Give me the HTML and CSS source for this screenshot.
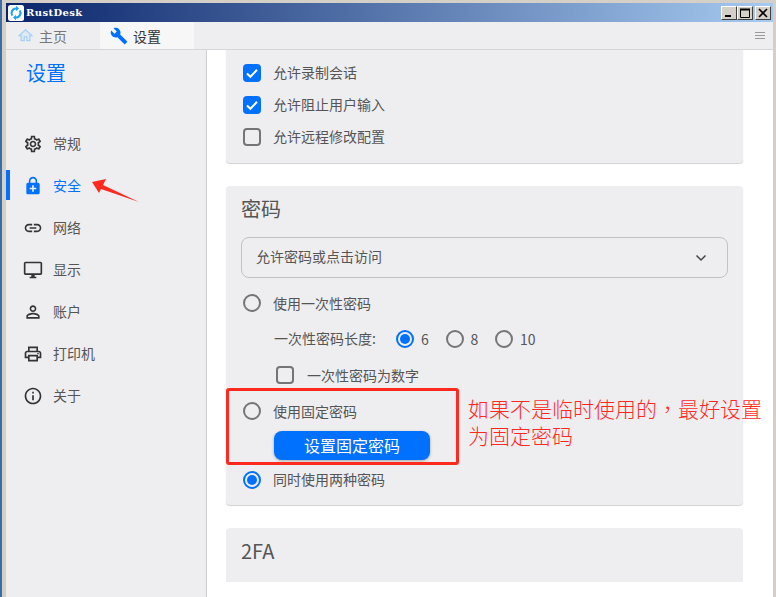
FILE: index.html
```html
<!DOCTYPE html>
<html lang="zh-CN">
<head>
<meta charset="utf-8">
<title>RustDesk</title>
<link rel="stylesheet" href="styles.css">
</head>
<body>
<div class="window">
  <div class="titlebar">
    <svg class="logo" viewBox="0 0 16 16"><rect width="16" height="16" rx="2.500" fill="#fff"/><path d="M8 2.400a5.600 5.600 0 0 0-4.500 8.900l1.700-1.300A3.500 3.500 0 0 1 8 4.500V6.300l3-2.800-3-2.800z" fill="#1ea3f0"/><path d="M8 13.600a5.600 5.600 0 0 0 4.500-8.900l-1.700 1.300A3.500 3.500 0 0 1 8 11.500V9.700l-3 2.800 3 2.800z" fill="#1ea3f0"/></svg>
    <span class="app-name">RustDesk</span>
    <div class="win-buttons">
      <span class="win-btn"><svg viewBox="0 0 12 10"><rect x="2" y="7" width="6" height="2" fill="#000"/></svg></span>
      <span class="win-btn"><svg viewBox="0 0 12 10"><path d="M1.500 1.500h9v8h-9z" fill="none" stroke="#000"/><rect x="1" y="0.500" width="10" height="2" fill="#000"/></svg></span>
      <span class="win-btn win-btn-close"><svg viewBox="0 0 12 10"><path d="M2 1l8 8M10 1l-8 8" stroke="#000" stroke-width="1.700" fill="none"/></svg></span>
    </div>
  </div>
  <div class="tabbar">
    <div class="tab">
      <svg class="tab-home" viewBox="0 0 24 24"><path d="M10 20v-6h4v6h5v-8h3L12 3 2 12h3v8z" fill="#dbeaf7" stroke="#a9d0f2" stroke-width="2"/></svg>
      <span class="tab-label-muted">主页</span>
    </div>
    <div class="tab tab-active">
      <svg class="tab-wrench" viewBox="0 0 24 24"><path d="M22.700 19l-9.100-9.100c.9-2.300.4-5-1.500-6.900-2-2-5-2.400-7.400-1.300L9 6 6 9 1.600 4.700C.4 7.100.9 10.100 2.900 12.100c1.900 1.900 4.600 2.400 6.900 1.500l9.100 9.100c.4.4 1 .4 1.400 0l2.300-2.300c.5-.4.5-1.100.1-1.400z"/></svg>
      <span>设置</span>
    </div>
    <div class="menu-icon"><i></i><i></i><i></i></div>
  </div>
  <div class="body">
    <nav class="sidebar">
      <div class="side-title">设置</div>
      <div class="side-item">
        <svg class="side-icon" viewBox="0 0 24 24"><path d="M19.430 12.980c.04-.32.07-.64.07-.98 0-.34-.03-.66-.07-.98l2.110-1.650c.19-.15.24-.42.12-.64l-2-3.460c-.09-.16-.26-.25-.44-.25-.06 0-.12.01-.17.03l-2.490 1c-.52-.4-1.080-.73-1.690-.98l-.38-2.650C14.460 2.180 14.250 2 14 2h-4c-.25 0-.46.18-.49.42l-.38 2.650c-.61.25-1.170.59-1.690.98l-2.490-1c-.06-.02-.12-.03-.18-.03-.17 0-.34.09-.43.25l-2 3.460c-.13.22-.07.49.12.64l2.110 1.650c-.04.32-.07.65-.07.98 0 .33.03.66.07.98l-2.110 1.650c-.19.15-.24.42-.12.64l2 3.460c.09.16.26.25.44.25.06 0 .12-.01.17-.03l2.490-1c.52.4 1.080.73 1.690.98l.38 2.650c.03.24.24.42.49.42h4c.25 0 .46-.18.49-.42l.38-2.650c.61-.25 1.170-.59 1.690-.98l2.490 1c.06.02.12.03.18.03.17 0 .34-.09.43-.25l2-3.460c.12-.22.07-.49-.12-.64l-2.110-1.650zm-1.980-1.710c.04.31.05.52.05.73 0 .21-.02.43-.05.73l-.14 1.130.89.7 1.080.84-.7 1.210-1.270-.51-1.040-.42-.9.68c-.43.32-.84.56-1.250.73l-1.060.43-.16 1.130-.2 1.350h-1.400l-.19-1.350-.16-1.130-1.060-.43c-.43-.18-.83-.41-1.230-.71l-.91-.7-1.060.43-1.270.51-.7-1.210 1.080-.84.89-.7-.14-1.130c-.03-.31-.05-.54-.05-.74s.02-.43.05-.73l.14-1.130-.89-.7-1.080-.84.7-1.210 1.270.51 1.040.42.9-.68c.43-.32.84-.56 1.250-.73l1.060-.43.16-1.130.2-1.350h1.390l.19 1.350.16 1.130 1.060.43c.43.18.83.41 1.230.71l.91.7 1.060-.43 1.270-.51.7 1.210-1.070.85-.89.7.14 1.130zM12 8c-2.210 0-4 1.790-4 4s1.790 4 4 4 4-1.790 4-4-1.790-4-4-4zm0 6c-1.100 0-2-.9-2-2s.9-2 2-2 2 .9 2 2-.9 2-2 2z"/></svg>
        <span>常规</span>
      </div>
      <div class="side-item side-item-active">
        <svg class="side-icon" viewBox="0 0 24 24"><path d="M18 8h-1V6c0-2.760-2.240-5-5-5S7 3.240 7 6v2H6c-1.100 0-2 .9-2 2v10c0 1.100.9 2 2 2h12c1.100 0 2-.9 2-2V10c0-1.100-.9-2-2-2zM8.900 6c0-1.710 1.390-3.100 3.100-3.100s3.100 1.390 3.100 3.100v2H8.900V6zM16 16h-3v3h-2v-3H8v-2h3v-3h2v3h3v2z"/></svg>
        <span>安全</span>
      </div>
      <div class="side-item">
        <svg class="side-icon" viewBox="0 0 24 24"><path d="M3.900 12c0-1.710 1.390-3.100 3.100-3.100h4V7H7c-2.760 0-5 2.240-5 5s2.240 5 5 5h4v-1.900H7c-1.710 0-3.100-1.390-3.100-3.100zM8 13h8v-2H8v2zm9-6h-4v1.900h4c1.710 0 3.100 1.390 3.100 3.100s-1.390 3.100-3.100 3.100h-4V17h4c2.760 0 5-2.240 5-5s-2.240-5-5-5z"/></svg>
        <span>网络</span>
      </div>
      <div class="side-item">
        <svg class="side-icon" viewBox="0 0 24 24"><path d="M21 2H3c-1.100 0-2 .9-2 2v12c0 1.100.9 2 2 2h7v2H8v2h8v-2h-2v-2h7c1.100 0 2-.9 2-2V4c0-1.100-.9-2-2-2zm0 14H3V4h18v12z"/></svg>
        <span>显示</span>
      </div>
      <div class="side-item">
        <svg class="side-icon" viewBox="0 0 24 24"><path d="M12 5.900c1.160 0 2.100.94 2.100 2.100s-.94 2.100-2.100 2.100S9.900 9.160 9.900 8s.94-2.100 2.100-2.100m0 9c2.970 0 6.100 1.460 6.100 2.100v1.100H5.900V17c0-.64 3.130-2.100 6.100-2.100M12 4C9.790 4 8 5.790 8 8s1.790 4 4 4 4-1.790 4-4-1.790-4-4-4zm0 9c-2.670 0-8 1.340-8 4v3h16v-3c0-2.660-5.330-4-8-4z"/></svg>
        <span>账户</span>
      </div>
      <div class="side-item">
        <svg class="side-icon" viewBox="0 0 24 24"><path d="M19 8h-1V3H6v5H5c-1.660 0-3 1.340-3 3v6h4v4h12v-4h4v-6c0-1.660-1.340-3-3-3zM8 5h8v3H8V5zm8 12v2H8v-4h8v2zm2-2v-2H6v2H4v-4c0-.55.45-1 1-1h14c.55 0 1 .45 1 1v4h-2z"/><circle cx="18" cy="11.500" r="1"/></svg>
        <span>打印机</span>
      </div>
      <div class="side-item">
        <svg class="side-icon" viewBox="0 0 24 24"><path d="M11 7h2v2h-2zm0 4h2v6h-2zm1-9C6.480 2 2 6.480 2 12s4.480 10 10 10 10-4.480 10-10S17.520 2 12 2zm0 18c-4.410 0-8-3.590-8-8s3.590-8 8-8 8 3.590 8 8-3.590 8-8 8z"/></svg>
        <span>关于</span>
      </div>
    </nav>
    <main class="main">
      <section class="card card-first">
        <div class="opt"><span class="check check-on"><svg viewBox="0 0 18 18"><path d="M4 9.500l3.400 3.300L14 5.800" fill="none" stroke="#fff" stroke-width="2"/></svg></span><span class="label">允许录制会话</span></div>
        <div class="opt"><span class="check check-on"><svg viewBox="0 0 18 18"><path d="M4 9.500l3.400 3.300L14 5.800" fill="none" stroke="#fff" stroke-width="2"/></svg></span><span class="label">允许阻止用户输入</span></div>
        <div class="opt"><span class="check"></span><span class="label">允许远程修改配置</span></div>
      </section>
      <section class="card card-password">
        <h2 class="card-title">密码</h2>
        <div class="select">
          <span class="label select-label">允许密码或点击访问</span>
          <svg class="chevron" viewBox="0 0 12 8"><path d="M1.500 1.500L6 6l4.500-4.500" fill="none" stroke="#444" stroke-width="1.500"/></svg>
        </div>
        <div class="opt opt-tall opt-first"><span class="radio"></span><span class="label">使用一次性密码</span></div>
        <div class="length-row">
          <span class="length-label label">一次性密码长度:</span>
          <span class="length-opt"><span class="radio radio-on"></span>6</span>
          <span class="length-opt"><span class="radio"></span>8</span>
          <span class="length-opt"><span class="radio"></span>10</span>
        </div>
        <div class="opt opt-tall opt-nested"><span class="check"></span><span class="label">一次性密码为数字</span></div>
        <div class="opt opt-tall"><span class="radio"></span><span class="label">使用固定密码</span></div>
        <button class="primary-btn" type="button">设置固定密码</button>
        <div class="opt opt-tall opt-last"><span class="radio radio-on"></span><span class="label">同时使用两种密码</span></div>
      </section>
      <section class="card card-2fa">
        <h2 class="card-title card-title-2fa">2FA</h2>
      </section>
    </main>
  </div>
  <svg class="note-arrow" viewBox="0 0 50 26"><path d="M2 4l14-3-3 6L49 24 11 11l-2 4z" fill="#ff2a1f"/></svg>
  <div class="note-box"></div>
  <div class="note-text" lang="zh-Hant">如果不是临时使用的，最好设置为固定密码</div>
</div>
</body>
</html>
```

FILE: styles.css
```css
* { box-sizing: border-box; }
html, body { margin: 0; padding: 0; height: 100%; overflow: hidden; background: #d4d0c8; }
body { border-left: 2px solid #3a6ea5; font-family: "Noto Sans CJK SC", "Noto Sans", sans-serif; font-size: 14px; color: #555; }

.window { position: relative; display: flex; flex-direction: column; height: 597px; padding: 3px 3px 0 4px; background: #d4d0c8; }

.titlebar { display: flex; align-items: center; flex: none; height: 19px; padding-left: 2px; background: linear-gradient(90deg, #0a246a, #a6caf0); }
.logo { width: 16px; height: 16px; flex: none; }
.app-name { margin-left: 2px; font-family: "DejaVu Serif", serif; font-size: 10px; font-weight: 700; letter-spacing: .4px; color: #fff; }
.win-buttons { display: flex; margin-left: auto; padding-right: 2px; }
.win-btn { display: flex; align-items: center; justify-content: center; width: 16px; height: 14px; background: #d4d0c8; border: 1px solid; border-color: #fff #404040 #404040 #fff; }
.win-btn-close { margin-left: 2px; }
.win-btn svg { width: 12px; height: 10px; }

.tabbar { display: flex; align-items: center; flex: none; height: 28px; background: #eeeef1; border-bottom: 1px solid #d6d6d8; color: #333; }
.tab { display: flex; align-items: center; gap: 6px; width: 94px; height: 27px; padding-left: 12px; }
.tab-active { gap: 5px; padding-left: 10px; background: #f7f7f8; }
.tab-home { width: 15px; height: 15px; }
.tab-label-muted { color: #777; }
.tab-wrench { width: 18px; height: 18px; fill: #0071ff; }
.menu-icon { display: flex; flex-direction: column; gap: 2px; margin-left: auto; margin-right: 8px; }
.menu-icon i { display: block; width: 10px; height: 1px; background: #999; }

.body { display: flex; flex: 1; min-height: 0; }

.sidebar { flex: none; width: 201px; background: #eeeef1; border-right: 1px solid #d0d0d0; }
.side-title { height: 73px; padding: 9px 0 0 20px; font-size: 20px; line-height: 28px; color: #0071ff; }
.side-item { display: flex; align-items: center; gap: 10px; height: 42px; padding-left: 17px; }
.side-item span { padding-bottom: 2px; }
.side-icon { width: 20px; height: 20px; flex: none; fill: #333; }
.side-item-active { position: relative; color: #0071ff; }
.side-item-active .side-icon { fill: #0071ff; }
.side-item-active::before { content: ""; position: absolute; left: 0; top: 5px; width: 4px; height: 30px; background: #0071ff; }

.main { flex: 1; min-width: 0; padding: 0 30px 15px 19px; background: #fff; overflow: hidden; }

.card { background: #eeeef1; border-radius: 4px; box-shadow: 0 1px 1px rgba(0, 0, 0, .18); padding: 0 15px; margin-bottom: 23px; }
.card-first { padding: 7px 3px 10px 16px; border-radius: 0 0 4px 4px; }
.card-password { height: 319px; }
.card-2fa { height: 54px; margin-bottom: 0; border-radius: 4px 4px 0 0; box-shadow: none; }
.card-title { margin: 0; height: 46px; font-size: 20px; font-weight: 400; line-height: 46px; color: #555; }
.card-title-2fa { height: 48px; line-height: 46px; }

.label { padding-bottom: 2px; }
.opt { display: flex; align-items: center; height: 32px; }
.opt-tall { height: 36px; padding-left: 2px; }
.opt-tall .label { padding-bottom: 0; }
.opt-first { margin-top: 7px; }
.opt-nested { padding-left: 34px; }
.opt-last { margin-top: 2px; }
.opt-last .label { padding-bottom: 2px; }

.check { display: flex; flex: none; width: 18px; height: 18px; margin: 0 12px 0 1px; border: 2px solid #757575; border-radius: 4px; }
.opt-nested .check { margin-right: 13px; }
.check-on { background: #0071ff; border: 0; }
.check-on svg { width: 18px; height: 18px; }

.radio { position: relative; flex: none; width: 18px; height: 18px; margin-right: 12px; border: 2px solid #757575; border-radius: 50%; }
.radio-on { border-color: #0071ff; }
.radio-on::after { content: ""; position: absolute; left: 2px; top: 2px; width: 10px; height: 10px; border-radius: 50%; background: #0071ff; }

.select { display: flex; align-items: center; justify-content: space-between; height: 41px; margin-top: 5px; padding: 0 20px 0 14px; border: 1px solid #c2c2c6; border-radius: 8px; }
.select-label { padding-bottom: 4px; }
.chevron { width: 12px; height: 8px; }

.length-row { display: flex; align-items: center; height: 36px; padding-left: 33px; }
.length-label { width: 122px; flex: none; }
.length-opt { display: flex; align-items: center; width: 49.500px; flex: none; }
.length-opt .radio { margin-right: 7px; }

.primary-btn { display: block; width: 156px; height: 29px; margin: 2px 0 0 33px; padding: 0; border: 0; border-radius: 8px; background: #0071ff; box-shadow: 0 1px 3px rgba(0, 0, 0, .3); font: inherit; font-size: 16px; line-height: 29px; color: #fff; }

.note-arrow { position: absolute; left: 88px; top: 178px; width: 50px; height: 26px; }
.note-box { position: absolute; left: 224px; top: 388px; width: 233px; height: 77px; border: 3px solid #ff2a1f; border-radius: 3px; }
.note-text { position: absolute; left: 466px; top: 395px; width: 298px; font-family: "Noto Sans CJK TC", sans-serif; font-size: 21px; font-weight: 300; line-height: 27px; color: #ff2a1f; }
```
